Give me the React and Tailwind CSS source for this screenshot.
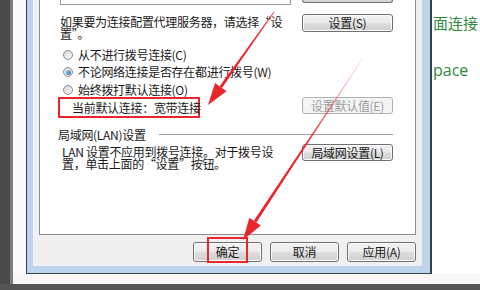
import React from "react";

const cjk = "font-['Noto_Sans_CJK_SC','Noto_Sans',sans-serif]";

const btn =
  "flex items-center justify-center rounded-[3px] border border-[#707070] bg-[linear-gradient(#f2f2f2_0%,#ebebeb_48%,#dddddd_52%,#cfcfcf_100%)] shadow-[inset_0_0_0_1px_#fbfbfb] text-[12px] leading-none text-[#1a1a1a]";

const btnOff =
  "flex items-center justify-center rounded-[3px] border border-[#adb2b5] bg-[#f4f4f4] text-[12px] leading-none text-[#9d9d9d]";

function Radio({ checked }) {
  return (
    <span className="flex h-[10px] w-[10px] shrink-0 items-center justify-center rounded-full border border-[#8d8f91] bg-[linear-gradient(135deg,#d4d4d4,#fbfbfb)]">
      {checked && (
        <span className="h-[5px] w-[5px] rounded-full bg-[radial-gradient(circle_at_35%_35%,#8ac4f0,#1f5f9e)]" />
      )}
    </span>
  );
}

function Option({ label, checked, className }) {
  return (
    <div className={`flex items-center pl-[3px] ${className}`}>
      <Radio checked={checked} />
      <span className="ml-[5px] whitespace-nowrap">{label}</span>
    </div>
  );
}

export default function App() {
  return (
    <div
      className={`relative flex h-[290px] w-[480px] flex-col overflow-hidden bg-[#4b4b4b] text-[12px] tracking-[-0.3px] text-[#1a1a1a] ${cjk}`}
    >
      <div className="flex h-[284px]">
        <div className="w-[10px] bg-[#4b4b4b]" />
        <div className="w-[3px] bg-[#7c7c7c]" />
        <div className="flex flex-1 flex-col bg-white">
          <div className="flex h-[274px]">
            <div className="w-[13px] bg-[#fafafa]" />

            {/* dialog */}
            <div className="flex h-[274px] w-[406px] flex-col border-b border-l border-r-2 border-[#34444f] bg-[#bed4ed] pb-[7px] pl-[6px] pr-[8px]">
              <div className="flex flex-1 flex-col bg-[#f0f0f0] px-[6px]">
                <div className="flex h-[235px] flex-col border-x border-b border-[#898c95] bg-white pl-[20px] pr-[22px]">
                  <div className="flex h-[5px] items-start justify-between">
                    <div className="h-[5px] w-[231px] border-x border-b border-[#9a9da3]" />
                    <div className="h-[3px] w-[91px] rounded-b-[3px] border-x border-b border-[#707070] bg-[#d6d6d6]" />
                  </div>

                  <div className="mt-[9px] flex items-start justify-between">
                    <p className="mt-[2px] leading-[12px]">
                      <span className="block whitespace-nowrap">如果要为连接配置代理服务器，请选择“设</span>
                      <span className="block whitespace-nowrap">置”。</span>
                    </p>
                    <button className={`${btn} h-[18px] w-[91px]`}>设置(S)</button>
                  </div>

                  <div className="mt-[6px] flex flex-col">
                    <Option className="h-[17px]" label="从不进行拨号连接(C)" />
                    <Option className="h-[18px]" label="不论网络连接是否存在都进行拨号(W)" checked />
                    <Option className="h-[17px]" label="始终拨打默认连接(O)" />
                  </div>

                  <div className="-mt-[1px] flex items-start justify-between">
                    <div className="-ml-[2px] flex h-[21px] w-[142px] items-center border-2 border-[#e8262b] pl-[12px] whitespace-nowrap">
                      当前默认连接：宽带连接
                    </div>
                    <button className={`${btnOff} h-[17px] w-[91px]`}>设置默认值(E)</button>
                  </div>

                  <div className="-ml-[2px] mt-[10px] flex h-[13px] items-center gap-[13px]">
                    <span className="whitespace-nowrap">局域网(LAN)设置</span>
                    <div className="h-[2px] flex-1 border-t border-b border-t-[#a0a0a0] border-b-white" />
                  </div>

                  <div className="mt-[3px] flex items-start justify-between">
                    <p className="ml-[2px] mt-[2px] leading-[12px]">
                      <span className="block whitespace-nowrap">LAN 设置不应用到拨号连接。对于拨号设</span>
                      <span className="block whitespace-nowrap">置，单击上面的“设置”按钮。</span>
                    </p>
                    <button className={`${btn} h-[17px] w-[91px]`}>局域网设置(L)</button>
                  </div>
                </div>

                <div className="flex justify-end gap-[8px] pt-[7px]">
                  <button className={`${btn} h-[20px] w-[69px]`}>确定</button>
                  <button className={`${btn} h-[20px] w-[69px]`}>取消</button>
                  <button className={`${btn} h-[20px] w-[69px]`}>应用(A)</button>
                </div>
              </div>
            </div>

            {/* page behind the dialog */}
            <div className="flex flex-1 flex-col overflow-hidden pl-[1px] text-[#2f8a3c] tracking-normal">
              <span className="mt-[14px] whitespace-nowrap text-[15px] leading-[18px]">面连接</span>
              <span className="mt-[28px] whitespace-nowrap font-['Open_Sans',sans-serif] text-[16px] leading-[20px]">
                pace
              </span>
            </div>
          </div>
          <div className="h-[10px] bg-[#f7f7f7]" />
        </div>
      </div>
      <div className="h-[6px] bg-[#545454]" />

      <svg className="pointer-events-none absolute inset-0" width="480" height="290" viewBox="0 0 480 290">
        <defs>
          <linearGradient id="fade" gradientUnits="userSpaceOnUse" x1="363" y1="58" x2="300" y2="150">
            <stop offset="0" stopColor="#e8262b" stopOpacity="0.25" />
            <stop offset="1" stopColor="#e8262b" stopOpacity="1" />
          </linearGradient>
        </defs>
        <polygon points="274.3,12.2 273.7,11.8 219.6,86.2 222,88" fill="#e8262b" />
        <polygon points="208,105 226.5,91.2 215.1,83" fill="#e8262b" />
        <polygon points="363.2,58.1 362.8,57.9 253.8,220.8 256.4,222.6" fill="url(#fade)" />
        <polygon points="243,240 260.9,225.6 249.3,217.8" fill="#e8262b" />
        <rect x="208" y="238" width="39" height="24" fill="none" stroke="#e8262b" strokeWidth="2" />
      </svg>
    </div>
  );
}
